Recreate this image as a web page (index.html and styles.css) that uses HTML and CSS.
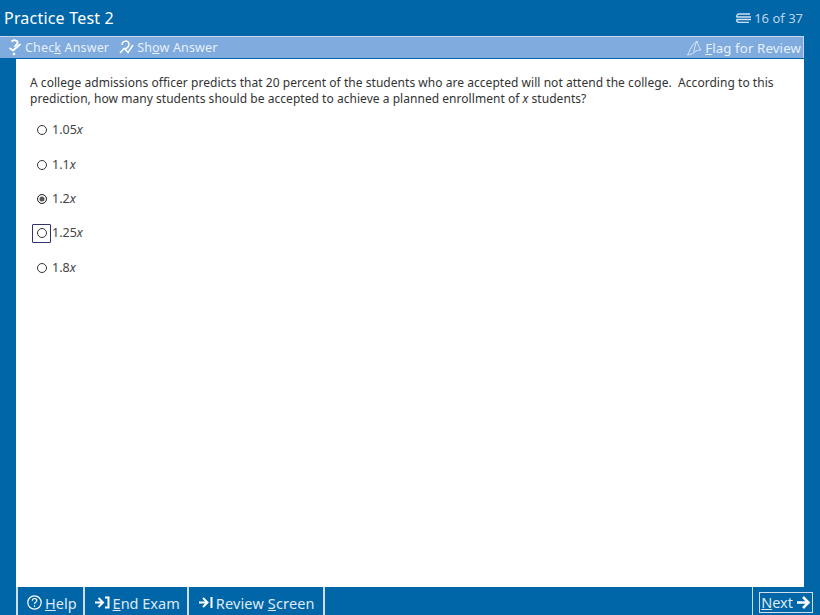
FILE: index.html
```html
<!DOCTYPE html>
<html lang="en">
<head>
    <meta charset="UTF-8">
    <title>Practice Test 2</title>
    <link rel="stylesheet" href="styles.css">
</head>
<body>
    <div class="header">
        <h1>Practice Test 2</h1>
        <div class="counter">
            <svg width="17" height="10" viewBox="0 0 17 10" fill="none" stroke="#cfe0f0" stroke-width="1.3"><path d="M4 1h11M1.500 4h14.500M1.500 6.500h14.500M4 9.300h10M1.500 4c0-1.500 1-3 2.500-3M1.500 6.500c0 1.500 1 2.800 2.500 2.800"/></svg>
            <span>16 of 37</span>
        </div>
    </div>

    <div class="toolbar">
        <a class="tool">
            <svg width="14" height="17" viewBox="0 0 14 17" fill="none" stroke="#fff" stroke-width="1.800"><path d="M3.500 2.500c2-2 6.500-1.500 6 1.300-.4 2-2.500 2.500-3 4.200"/><path d="M1.500 9l3.500 2.500L12.500 5"/><circle cx="6" cy="15" r="1.300" fill="#fff" stroke="none"/></svg>
            <span>Chec<u>k</u> Answer</span>
        </a>
        <a class="tool">
            <svg width="15" height="15" viewBox="0 0 15 15" fill="none" stroke="#fff" stroke-width="1.500"><path d="M3 5c0-5 7-5 7-1 0 3-2.500 5-5 4.500L1 13"/><path d="M6 9l3 3.500L14 5"/></svg>
            <span>Sh<u>o</u>w Answer</span>
        </a>
        <a class="tool flag">
            <svg width="15" height="16" viewBox="0 0 15 16" fill="none" stroke="#dbe7f5" stroke-width="1"><path d="M.5 15C3 11 4 5 10 1c.500 3 2 6 4 9-3 0-5 .500-7 2.500-2 1.500-4 2-6.500 2.500zM10 1C8 5 7 9 7 12.500"/></svg>
            <span><u>F</u>lag for Review</span>
        </a>
    </div>

    <div class="content">
        <p class="question">A college admissions officer predicts that 20 percent of the students who are accepted will not attend the college.&nbsp; According to this prediction, how many students should be accepted to achieve a planned enrollment of <i>x</i> students?</p>
        <div class="answers">
            <div class="answer"><span class="box"><span class="radio"></span></span><span class="label">1.05<i>x</i></span></div>
            <div class="answer"><span class="box"><span class="radio"></span></span><span class="label">1.1<i>x</i></span></div>
            <div class="answer"><span class="box"><span class="radio checked"></span></span><span class="label">1.2<i>x</i></span></div>
            <div class="answer"><span class="box focus"><span class="radio"></span></span><span class="label">1.25<i>x</i></span></div>
            <div class="answer"><span class="box"><span class="radio"></span></span><span class="label">1.8<i>x</i></span></div>
        </div>
    </div>

    <div class="footer">
        <a class="btn btn-help">
            <svg width="15" height="15" viewBox="0 0 15 15" fill="none" stroke="#fff" stroke-width="1.200"><circle cx="7.500" cy="7.500" r="6.700"/><path d="M5.300 5.800c0-3 4.500-3 4.500-.300 0 1.700-2.300 1.700-2.300 3.500"/><path d="M7.500 10.300v1.500"/></svg>
            <span><u>H</u>elp</span>
        </a>
        <a class="btn">
            <svg width="16" height="13" viewBox="0 0 16 13" fill="none" stroke="#fff" stroke-width="2"><path d="M1 6.500h7M4.500 2l4.500 4.500L4.500 11M11 1.500h3.500v10H11"/></svg>
            <span><u>E</u>nd Exam</span>
        </a>
        <a class="btn">
            <svg width="15" height="13" viewBox="0 0 15 13" fill="none" stroke="#fff" stroke-width="2"><path d="M1 6.500h7.500M5 2l4.500 4.500L5 11M13.500 1v11"/></svg>
            <span class="review">Review <u>S</u>creen</span>
        </a>
        <a class="btn btn-next">
            <span class="next-inner">
                <span><u>N</u>ext</span>
                <svg width="15" height="15" viewBox="0 0 15 15" fill="none" stroke="#fff" stroke-width="2.500"><path d="M1 7.500h11M7 2l5.500 5.500L7 13"/></svg>
            </span>
        </a>
    </div>
</body>
</html>
```

FILE: styles.css
```css
html, body {
    height: 100%;
}
body {
    margin: 0;
    height: 615px;
    overflow: hidden;
    display: flex;
    flex-direction: column;
    background: #0066a8;
    color: #333;
    font-family: "Noto Sans", sans-serif;
    font-size: 12px;
}
svg {
    flex: none;
}
.header {
    height: 36px;
    display: flex;
    align-items: center;
    justify-content: space-between;
    padding: 0 17px 0 4px;
    color: #fff;
}
.header h1 {
    margin: 0;
    font-size: 16px;
    font-weight: normal;
    letter-spacing: 0.2px;
}
.counter {
    display: flex;
    align-items: center;
    gap: 2px;
    color: #bcd3e8;
    font-size: 13px;
}
.toolbar {
    height: 21px;
    margin-right: 16px;
    border-top: 1px solid #c6d9ef;
    border-right: 1px solid #c6d9ef;
    background: #7fabdf;
    display: flex;
    align-items: center;
    padding: 0 2px 0 8px;
    gap: 10px;
    color: #e8f0fa;
    font-size: 12.500px;
    letter-spacing: 0.15px;
}
.tool {
    display: flex;
    align-items: center;
    gap: 3px;
}
.flag {
    margin-left: auto;
    font-size: 13.200px;
}
.content {
    flex: 1;
    margin: 1px 16px 0;
    background: #fff;
    padding: 16px 14px 0;
}
.question {
    margin: 0;
    font-size: 12px;
    line-height: 16px;
    letter-spacing: 0.04px;
}
.answers {
    margin-top: 6px;
    margin-left: 2px;
}
.answer {
    height: 34.400px;
    display: flex;
    align-items: center;
    font-size: 12.500px;
    color: #444;
}
.label {
    padding-bottom: 1px;
}
.box {
    width: 19px;
    height: 19px;
    box-sizing: border-box;
    border: 1px solid transparent;
    display: flex;
    align-items: center;
    justify-content: center;
    margin-right: 1px;
    border-radius: 1px;
}
.box.focus {
    border-color: #33336b;
}
.radio {
    width: 10px;
    height: 10px;
    box-sizing: border-box;
    border: 1.500px solid #333;
    border-radius: 50%;
}
.radio.checked {
    background: #555;
    box-shadow: inset 0 0 0 1.500px #fff;
}
.footer {
    height: 28px;
    display: flex;
    padding-left: 16px;
    font-size: 14.500px;
    color: #dfeaf5;
}
.btn {
    display: flex;
    align-items: center;
    gap: 3px;
    padding: 3px 7px 0 9px;
    border-right: 2px solid #cfdeee;
    white-space: nowrap;
}
.btn-help {
    border-left: 2px solid #cfdeee;
    padding-right: 6px;
}
.review {
    letter-spacing: 0.15px;
    margin-right: 1px;
}
.btn-next {
    margin-left: auto;
    border-right: 0;
    border-left: 1px solid #cfdeee;
    padding: 2px 8px 0 7px;
}
.next-inner {
    display: flex;
    align-items: center;
    gap: 3px;
    outline: 1px solid #cfdeee;
    padding: 0 1px;
    height: 19px;
}
```
